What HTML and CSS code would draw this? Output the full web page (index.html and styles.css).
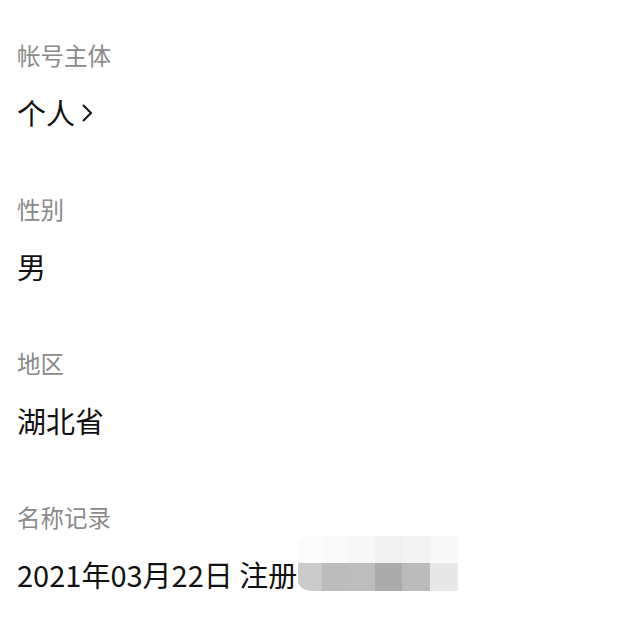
FILE: index.html
```html
<!DOCTYPE html>
<html lang="zh-CN">
<head>
<meta charset="utf-8">
<link rel="stylesheet" href="styles.css">
</head>
<body>
<main class="page">
  <section class="item">
    <div class="label">帐号主体</div>
    <div class="value">个人<svg class="chev" width="12" height="22" viewBox="0 0 12 22"><path d="M2 3 L10 11 L2 19" fill="none" stroke="#111" stroke-width="2"/></svg></div>
  </section>
  <section class="item">
    <div class="label">性别</div>
    <div class="value">男</div>
  </section>
  <section class="item">
    <div class="label">地区</div>
    <div class="value">湖北省</div>
  </section>
  <section class="item last">
    <div class="label">名称记录</div>
    <div class="value">2021年03月22日 注册<span class="mosaic">
      <i class="c t1 first"></i><i class="c t2"></i><i class="c t3"></i><i class="c t4"></i><i class="c t5"></i><i class="c t6"></i>
      <i class="c b1 firstb"></i><i class="c b2"></i><i class="c b3"></i><i class="c b4"></i><i class="c b5"></i><i class="c b6"></i>
    </span></div>
  </section>
</main>
</body>
</html>
```
FILE: styles.css
```css
html, body {
  margin: 0;
  padding: 0;
  background: #fff;
}
.page {
  padding: 37px 0 0 17px;
  font-family: "Noto Sans CJK SC", "Noto Sans", sans-serif;
}
.item {
  margin-bottom: 58px;
}
.item.last {
  margin-bottom: 0;
}
.label {
  font-size: 23.5px;
  line-height: 36px;
  color: #8a8a8a;
}
.value {
  margin-top: 19px;
  font-size: 29px;
  line-height: 41px;
  color: #111;
  display: flex;
  align-items: center;
}
.chev {
  margin-left: 6px;
}
.mosaic {
  display: inline-grid;
  grid-template-columns: 24px 26px 27px 27px 28px 28px;
  grid-template-rows: 27px 28px;
  margin-top: -22px;
  margin-left: 1px;
}
.c { display: block; }
.first { border-top-left-radius: 14px 10px; }
.firstb { border-bottom-left-radius: 14px 10px; }
.t1 { background: #fbfbfb; }
.t2 { background: #f9f9f9; }
.t3 { background: #f6f6f6; }
.t4 { background: #f1f1f1; }
.t5 { background: #f4f4f4; }
.t6 { background: #f8f8f8; }
.b1 { background: #cbcbcb; }
.b2 { background: #bcbcbc; }
.b3 { background: #bdbdbd; }
.b4 { background: #ababab; }
.b5 { background: #bbbbbb; }
.b6 { background: #e8e8e8; }
```
